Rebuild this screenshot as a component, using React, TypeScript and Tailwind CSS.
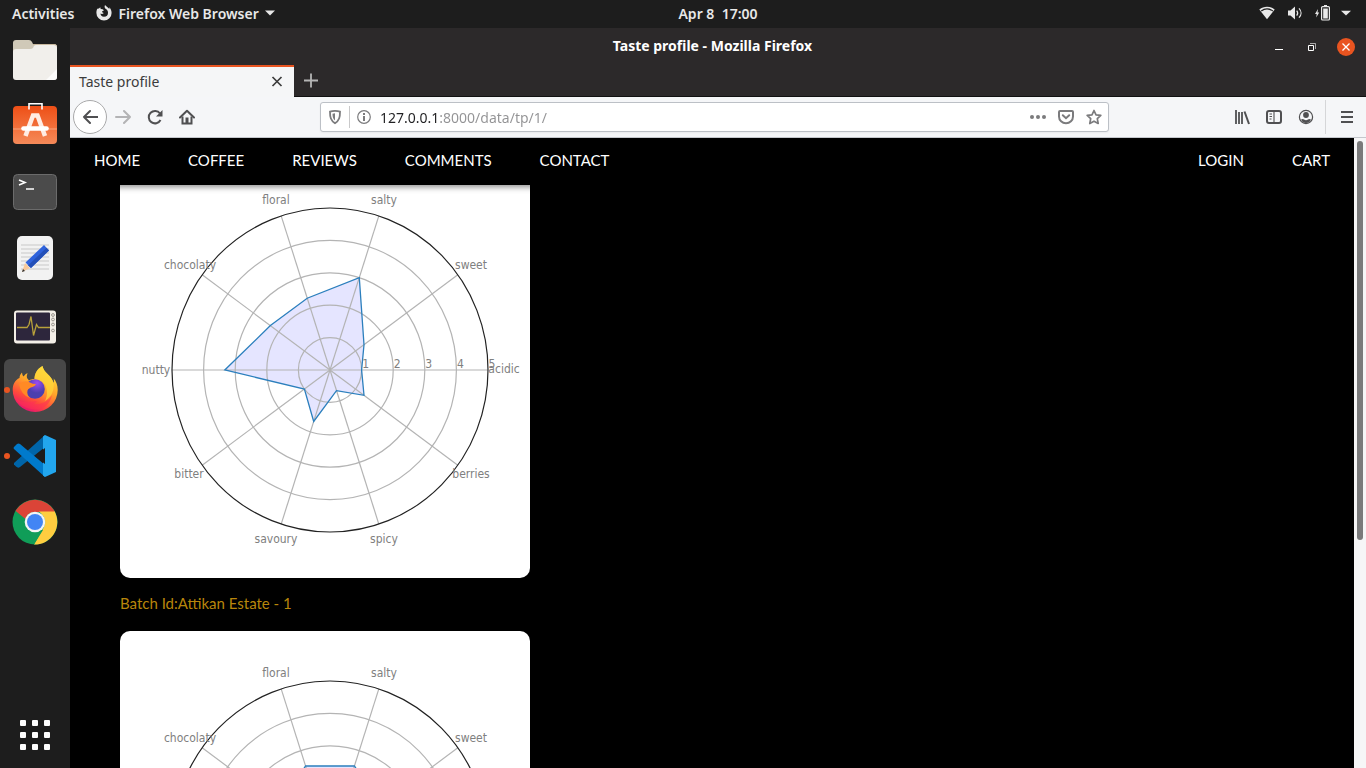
import type { ReactNode } from "react";

type Profile = { id: string; caption: string; values: number[] };

const PROFILES: Profile[] = [
  {
    id: "batch-1",
    caption: "Batch Id:Attikan Estate - 1",
    values: [1, 1.33, 3, 2.33, 2.33, 3.33, 1, 1.67, 0.67, 1.33],
  },
  {
    id: "batch-2",
    caption: "Batch Id:Attikan Estate - 2",
    values: [2, 2, 2.5, 2.5, 2, 2, 1.5, 1, 1, 1.5],
  },
];

const LABELS = [
  { text: "acidic", x: 384, y: 215 },
  { text: "sweet", x: 351, y: 111 },
  { text: "salty", x: 264, y: 46 },
  { text: "floral", x: 156, y: 46 },
  { text: "chocolaty", x: 70, y: 111 },
  { text: "nutty", x: 36, y: 216 },
  { text: "bitter", x: 69, y: 320 },
  { text: "savoury", x: 156, y: 385 },
  { text: "spicy", x: 264, y: 385 },
  { text: "berries", x: 351, y: 320 },
];

const CX = 210;
const CY = 212;
const RX = 31.6;
const RY = 32.4;

function polar(index: number, radius: number) {
  const a = (index * Math.PI) / 5;
  return { x: CX + Math.cos(a) * radius * RX, y: CY - Math.sin(a) * radius * RY };
}

function RadarChart({ values }: { values: number[] }) {
  const points = values
    .map((v, i) => {
      const p = polar(i, v);
      return `${p.x.toFixed(1)},${p.y.toFixed(1)}`;
    })
    .join(" ");
  return (
    <svg viewBox="0 0 410 420" className="block w-full" role="img" aria-label="Taste profile chart">
      <polygon points={points} fill="#0000ff" fillOpacity="0.1" />
      <g fill="none" stroke="#b4b4b4" strokeWidth="1.2">
        {[1, 2, 3, 4].map((r) => (
          <ellipse key={r} cx={CX} cy={CY} rx={r * RX} ry={r * RY} />
        ))}
        {LABELS.map((l, i) => {
          const p = polar(i, 5);
          return <line key={l.text} x1={CX} y1={CY} x2={p.x} y2={p.y} />;
        })}
      </g>
      <polygon points={points} fill="none" stroke="#2b7fbd" strokeWidth="1.3" />
      <ellipse cx={CX} cy={CY} rx={5 * RX} ry={5 * RY} fill="none" stroke="#222" strokeWidth="1.2" />
      <g fill="#808080" textAnchor="middle" className="font-['DejaVu_Sans_Condensed','DejaVu_Sans',sans-serif] text-[12px]">
        {LABELS.map((l) => (
          <text key={l.text} x={l.x} y={l.y}>
            {l.text}
          </text>
        ))}
        {[1, 2, 3, 4, 5].map((n) => (
          <text key={n} x={214 + n * RX} y={210}>
            {n}
          </text>
        ))}
      </g>
    </svg>
  );
}

function Icon({ children, className = "size-4" }: { children: ReactNode; className?: string }) {
  return (
    <svg viewBox="0 0 16 16" className={`block shrink-0 ${className}`} fill="none" stroke="currentColor" strokeWidth="2" aria-hidden="true">
      {children}
    </svg>
  );
}

function TopBar() {
  return (
    <header className="grid h-7 shrink-0 grid-cols-[70px_1fr_auto_1fr] items-center bg-[#1d1d1d] pb-0.5 text-[14px] font-semibold text-[#e8e8e8]">
      <div className="col-span-2 flex items-center pl-3">
        <button type="button">Activities</button>
        <button type="button" className="ml-[22px] flex items-center gap-1.5">
          <Icon>
            <path
              d="M1.300 3.800C.6 5 .4 6.500.4 8a7.600 7.600 0 0 0 15.200 0c0-2.500-.9-4.500-2.500-5.800.3.700.4 1.300.3 1.900C12.600 2.700 10.700 2.200 9 0c-.7 1.600-.4 2.800.5 3.700C11.300 4.700 12 6 12 7.700a4 4 0 0 1-4 4c-2.200 0-3.500-1.600-3.500-3.200 1.200.7 2.600.4 3.200-.5-.9 0-1.600-.6-1.700-1.400L8 5.300C7 4.500 6 4 4.700 4.100L4.300 2.300 2.900 3.600z"
              fill="currentColor"
              stroke="none"
            />
          </Icon>
          <span>Firefox Web Browser</span>
          <Icon className="h-4 w-2.5">
            <path d="M0 4h16L8 12z" fill="currentColor" stroke="none" />
          </Icon>
        </button>
      </div>
      <time className="whitespace-pre">Apr 8  17:00</time>
      <button type="button" aria-label="System menu" className="flex items-center justify-end gap-3 pr-[15px]">
        <Icon>
          <path d="M.3 4.500C4.800.8 11.200.8 15.700 4.500L8 14.200z" fill="currentColor" stroke="none" />
          <path d="M2.200 5.900C5.700 3.500 10.300 3.500 13.800 5.900" stroke="#1d1d1d" strokeWidth="1.200" />
        </Icon>
        <Icon>
          <path d="M1 5.500h2.500L8 1.500v13l-4.500-4H1z" fill="currentColor" stroke="none" />
          <path d="M9.700 5.500a4 4 0 0 1 0 5M12 3.300c2.700 2.800 2.700 6.600 0 9.400" strokeWidth="1.200" />
        </Icon>
        <Icon>
          <path d="M3 4 0 9h1.700L1.200 12.500 4.200 7.500H2.500z" fill="currentColor" stroke="none" />
          <path d="M9 .5h3" strokeWidth="1" />
          <rect x="6.600" y="1.600" width="7.800" height="13.400" rx="1" strokeWidth="1.200" />
          <rect x="8.200" y="3.500" width="4.600" height="10" fill="currentColor" stroke="none" />
        </Icon>
        <Icon className="-ml-0.5 h-4 w-2.5">
          <path d="M0 4.500h16L8 12z" fill="currentColor" stroke="none" />
        </Icon>
      </button>
    </header>
  );
}

function DockItem({ label, active = false, running = false, children }: { label: string; active?: boolean; running?: boolean; children: ReactNode }) {
  return (
    <li>
      <button
        type="button"
        aria-label={label}
        className={`relative flex size-[62px] items-center justify-center rounded-md ${active ? "bg-[#484848]" : ""}`}
      >
        {running && <span className="absolute left-0 size-1.5 rounded-full bg-[#e95420]" />}
        <svg viewBox="0 0 48 48" className="size-12" aria-hidden="true">
          {children}
        </svg>
      </button>
    </li>
  );
}

function Dock() {
  return (
    <nav aria-label="Applications" className="flex w-[70px] shrink-0 flex-col items-center justify-between bg-[#1d1d1d] pt-px pb-0.5">
      <ul className="flex flex-col gap-1">
        <DockItem label="Files">
          <path d="M2 7q0-3 3-3h13q2 0 3 2l1 2h21q3 0 3 3v10H2z" fill="#d0c9b8" />
          <path d="M2 16q0-3 3-3h14q2 0 3-1l1-2q1-1 2-1h18q3 0 3 3v29q0 3-3 3H5q-3 0-3-3z" fill="#f1efeb" />
          <path d="M46 33v8q0 3-3 3h-8z" fill="#fff" opacity=".8" />
          <path d="M22 8.500h21q2 0 3 1.500" stroke="#c9b99f" fill="none" />
        </DockItem>
        <DockItem label="Ubuntu Software">
          <defs>
            <linearGradient id="soft" x2="0" y2="1">
              <stop stopColor="#ee4f16" />
              <stop offset="1" stopColor="#f58a59" />
            </linearGradient>
          </defs>
          <g transform="translate(0 -2)">
            <rect x="2" y="6" width="44" height="38" rx="4" fill="url(#soft)" />
            <path d="M2 29h44" stroke="#f8a47e" strokeWidth="1" />
            <path d="M18 9.500V3.800h13v5.700" fill="none" stroke="#fff" strokeWidth="1.600" />
            <path d="m14.500 36 7.500-20.500h4.500L34 36" fill="none" stroke="#ffece4" strokeWidth="4.500" />
            <path d="M12.500 28.500h23" stroke="#fff" strokeWidth="4.600" strokeLinecap="round" />
          </g>
        </DockItem>
        <DockItem label="Terminal">
          <rect x="2.500" y="6.500" width="43" height="35" rx="4" fill="#4b4b4b" stroke="#6b6b6b" />
          <path d="m8 12 6 2.500L8 17M15 21h8" stroke="#fff" strokeWidth="1.600" fill="none" />
        </DockItem>
        <DockItem label="Text Editor">
          <rect x="6" y="2" width="36" height="44" rx="5" fill="#f2f2f2" />
          <path d="M10 11h28M10 15h28M10 19h28M10 23h28M10 27h28M10 31h28M10 35h28" stroke="#c8c8c8" />
          <path d="m11 38 3-9 5 5z" fill="#f8c99b" />
          <path d="m11 38 1-3 2 2z" fill="#333" />
          <path d="M14.500 28.500 33 11l5 5.500L20 34z" fill="#2f63dc" />
          <path d="M17 31.500 35.500 13.800l2.500 2.700L20 34z" fill="#2450b8" />
        </DockItem>
        <DockItem label="System Monitor">
          <g transform="translate(0 3.500)">
            <rect x="3" y="7" width="42" height="33" rx="3" fill="#f3efe7" />
            <rect x="5" y="9" width="34" height="28" rx="1" fill="#2d263c" />
            <path d="M6 24h10l2-3 2-8 2.500 19 3-11 2 3H39" fill="none" stroke="#b8a13b" strokeWidth="1.300" />
            <g fill="none" stroke="#99958e">
              <circle cx="42" cy="11.500" r="1.400" />
              <circle cx="42" cy="16" r="1.400" />
              <circle cx="42" cy="21" r="1.400" />
              <circle cx="42" cy="27" r="1.400" />
            </g>
          </g>
        </DockItem>
        <DockItem label="Firefox" active running>
          <defs>
            <linearGradient id="fx" x1=".8" y1=".1" x2=".35" y2="1">
              <stop stopColor="#ffe03c" />
              <stop offset=".4" stopColor="#ffa52a" />
              <stop offset=".72" stopColor="#ff4d3a" />
              <stop offset="1" stopColor="#e7136f" />
            </linearGradient>
            <radialGradient id="fxg" cx=".6" cy=".2">
              <stop stopColor="#9c4cf0" />
              <stop offset="1" stopColor="#4b3fae" />
            </radialGradient>
          </defs>
          <g transform="translate(0 -1.500)">
            <path
              d="M11 8c-1.500 1.500-2.500 3.500-2.500 5.500C4 15.500 1.700 20 1.700 25.500a22.500 22 0 0 0 45 0c0-5-1.500-8.500-4-11.500 .3 2 .2 3-.1 4.500C40.500 10.500 33 9 31.500 1.500 26 4.500 23.500 9.500 23.500 14.500c-2.500 0-4 .5-5.500 1.500L16 13.500q-.5-2.500.5-5-2 .8-4 3.500Q11 10 11 8z"
              fill="url(#fx)"
            />
            <path d="M31.500 1.500c1.500 7.500 9 9 11.100 17 1 10-4 15-8.600 18 3-5 3-15-2.500-19-3-2-5.500-3-8-3 0-5 2.500-10 8-13z" fill="#ffd93a" opacity=".7" />
            <circle cx="24" cy="24.500" r="9.800" fill="url(#fxg)" />
            <path d="M8 19.500q6-4.500 11-1.500 2.500 1.500 6 1.500-.5 2-3.500 3-4 1-5 3.500-1 4 2.500 7.500-9-3-11-14z" fill="#ff8a25" />
            <path d="M3 31q6 8 15 6.500 5-.5 8-1-3 2.500-3 3.500 12 0 18-9-4 14-17 14Q8 44 3 31z" fill="#ff3056" opacity=".55" />
          </g>
        </DockItem>
        <DockItem label="Visual Studio Code" running>
          <path d="M3 31 34 3v12L9 35q-2 1.500-4-.5l-2-2z" fill="#0065a9" />
          <path d="M3 17q-1-1 0-2l3-3q1.500-1 3 0L34 33v12z" fill="#007acc" />
          <path d="M34 3 45 8v32l-11 5-2-1.500V4.500z" fill="#22a6ee" />
          <path d="M24 24 34 16v16z" fill="#1d1d1d" />
        </DockItem>
        <DockItem label="Google Chrome">
          <circle cx="24" cy="24" r="22.500" fill="#109d58" />
          <path d="M4.500 13A22.500 22.500 0 0 1 44 14H24a10 10 0 0 0-9.500 7z" fill="#db4437" />
          <path d="M43.700 13.500A22.500 22.500 0 0 1 23 46.500L33 29q4-8-5-15.500z" fill="#ffcd40" />
          <path d="M4.500 13 15.500 29 23 46.500l9-14.500H24z" fill="#109d58" />
          <circle cx="24" cy="24" r="10.300" fill="#f4f4f4" />
          <circle cx="24" cy="24" r="8" fill="#4285f4" />
        </DockItem>
      </ul>
      <button type="button" aria-label="Show Applications" className="grid size-[62px] grid-cols-[6px_6px_6px] place-content-center gap-1.5">
        {Array.from({ length: 9 }, (_, i) => (
          <span key={i} className="size-1.5 rounded-[1px] bg-white" />
        ))}
      </button>
    </nav>
  );
}

function TitleAndTabs() {
  return (
    <div className="shrink-0 bg-[#2c292a]">
      <div className="grid h-[37px] grid-cols-[1fr_auto_1fr] items-center pr-[11px]">
        <h1 className="col-start-2 pb-0.5 text-[14px] font-bold text-white">Taste profile - Mozilla Firefox</h1>
        <div className="flex items-center justify-end gap-[17px] text-white">
          <button type="button" aria-label="Minimize">
            <Icon>
              <path d="M4 10.500h8" strokeWidth="1" />
            </Icon>
          </button>
          <button type="button" aria-label="Restore">
            <Icon>
              <path d="M4.500 6.500h5v5h-5z" strokeWidth="1" />
              <path d="M6 4.500h5.500V10" strokeWidth="1" opacity=".6" />
            </Icon>
          </button>
          <button type="button" aria-label="Close window" className="flex size-[18px] items-center justify-center rounded-full bg-[#e95420]">
            <Icon>
              <path d="m4.500 4.500 7 7m0-7-7 7" strokeWidth="1.300" />
            </Icon>
          </button>
        </div>
      </div>
      <div className="flex h-8 items-stretch border-b border-[#111]">
        <div className="-mb-px flex w-56 items-center justify-between border-t-2 border-[#e95420] bg-[#f5f6f7] pr-[9px] pb-0.5 pl-[9px] text-[#3c3c3c]">
          <span className="text-[14px]">Taste profile</span>
          <button type="button" aria-label="Close tab">
            <Icon>
              <path d="m3.500 4 9 9m0-9-9 9" strokeWidth="1.700" />
            </Icon>
          </button>
        </div>
        <button type="button" aria-label="New tab" className="px-2.5 pb-0.5 text-[#b5b5b5]">
          <Icon>
            <path d="M7 1.500v14M0 8.500h14" strokeWidth="1.800" />
          </Icon>
        </button>
      </div>
    </div>
  );
}

function Toolbar() {
  return (
    <div className="flex h-[41px] shrink-0 items-center border-b border-[#c4c7cc] bg-[#f5f6f8] pl-[3px] text-[#505052]">
      <button type="button" aria-label="Back" className="flex size-[34px] items-center justify-center rounded-full border border-[#a9a9aa] bg-white">
        <Icon>
          <path d="M15.500 8H2M8 2 2 8l6 6" strokeLinecap="round" strokeLinejoin="round" />
        </Icon>
      </button>
      <div className="ml-2 flex gap-4">
        <button type="button" aria-label="Forward" className="text-[#b3b3b5]">
          <Icon>
            <path d="M1 8h14M9 2l6 6-6 6" strokeLinecap="round" strokeLinejoin="round" />
          </Icon>
        </button>
        <button type="button" aria-label="Reload">
          <Icon>
            <path d="M13.500 11A6.200 6.200 0 1 1 13 4.500" />
            <path d="M15.500 1v6.500H9z" fill="currentColor" stroke="none" />
          </Icon>
        </button>
        <button type="button" aria-label="Home">
          <Icon>
            <path d="M1 8.500 8 1.800l7 6.700" strokeLinecap="round" strokeLinejoin="round" />
            <path d="M3.500 7.500V14.500h9V7.500" />
            <path d="M6.500 8.500h3v6h-3z" fill="currentColor" stroke="none" />
          </Icon>
        </button>
      </div>
      <div className="mx-[125px] flex h-[30px] min-w-0 flex-1 items-center rounded-[3px] border border-[#bcc0c6] bg-white px-1.5 text-[#7b7b7d] shadow-xs">
        <Icon>
          <path d="M8 1.800c1.800 0 3.500.3 5 .9 0 5.500-.7 8.800-5 11.500C3.700 11.500 3 8.200 3 2.700c1.500-.6 3.200-.9 5-.9z" strokeWidth="1.800" />
          <path d="M8 4.300v7.200C6 10 5.500 8 5.500 4.700q1-.4 2.500-.4z" fill="currentColor" stroke="none" />
        </Icon>
        <span className="mx-1.5 h-[22px] w-px bg-[#c9c9ca]" />
        <Icon>
          <circle cx="8" cy="8" r="6.300" strokeWidth="1.200" />
          <path d="M8 7v5" />
          <path d="M8 4v2" />
        </Icon>
        <input
          aria-label="Address"
          type="text"
          defaultValue="127.0.0.1:8000/data/tp/1/"
          className="ml-2 min-w-0 flex-1 bg-[linear-gradient(to_right,#202022_58px,#929294_58px)] bg-clip-text text-[14px] text-transparent outline-none"
        />
        <div className="flex gap-3">
          <button type="button" aria-label="Page actions">
            <Icon>
              <g fill="currentColor" stroke="none">
                <circle cx="2" cy="8" r="2" />
                <circle cx="8" cy="8" r="2" />
                <circle cx="14" cy="8" r="2" />
              </g>
            </Icon>
          </button>
          <button type="button" aria-label="Save to Pocket">
            <Icon>
              <path d="M1 3q0-1 1-1h12q1 0 1 1v4.500a7 6.800 0 0 1-14 0z" />
              <path d="m4.800 6.200 3.200 3 3.200-3" strokeLinecap="round" />
            </Icon>
          </button>
          <button type="button" aria-label="Bookmark this page">
            <Icon>
              <path d="m8 1.500 2 4.300 4.800.6-3.500 3.300.9 4.800L8 12.200l-4.200 2.300.9-4.800L1.200 6.400 6 5.800z" strokeWidth="1.700" strokeLinejoin="round" />
            </Icon>
          </button>
        </div>
      </div>
      <div className="flex gap-4">
        <button type="button" aria-label="Library">
          <Icon>
            <path d="M2 1v14M5 3v12M8 3v12" strokeWidth="1.800" />
            <path d="m10.500 2.500 4.500 12.500" />
          </Icon>
        </button>
        <button type="button" aria-label="Sidebars">
          <Icon>
            <rect x="1" y="2" width="14" height="12" rx="2" />
            <path d="M8 2v12M3.500 5h2.500M3.500 7.500h2.500M3.500 10h2" strokeWidth="1.100" />
          </Icon>
        </button>
        <button type="button" aria-label="Account">
          <Icon>
            <circle cx="8" cy="8" r="6.600" strokeWidth="1.200" />
            <circle cx="8" cy="6" r="2.900" fill="currentColor" stroke="none" />
            <path d="M3 10.500q2-1 3 0 2 1.500 4 0 1-1 3 0-1.500 3.500-5 3.500t-5-3.500z" fill="currentColor" stroke="none" />
          </Icon>
        </button>
      </div>
      <div className="ml-[11px] flex h-[34px] items-center border-l border-[#d5d6d8] pr-[11px] pl-[13px]">
        <button type="button" aria-label="Open menu">
          <Icon>
            <path d="M2 3h12M2 8h12M2 13h12" />
          </Icon>
        </button>
      </div>
    </div>
  );
}

function NavLinks({ items }: { items: string[] }) {
  return (
    <ul className="flex gap-12">
      {items.map((item) => (
        <li key={item}>
          <a href={`#${item.toLowerCase()}`}>{item}</a>
        </li>
      ))}
    </ul>
  );
}

function Page() {
  return (
    <div className="flex min-h-0 flex-1">
      <div className="min-w-0 flex-1 overflow-hidden bg-black font-['Lato',sans-serif] text-[15px]">
        <nav aria-label="Main" className="relative z-10 flex h-[47px] items-center justify-between bg-black px-6 pb-0.5 text-white shadow-[0_2px_6px_rgba(0,0,0,0.45)]">
          <NavLinks items={["HOME", "COFFEE", "REVIEWS", "COMMENTS", "CONTACT"]} />
          <NavLinks items={["LOGIN", "CART"]} />
        </nav>
        <main className="-mt-[27px] pl-[50px]">
          {PROFILES.map((p) => (
            <figure key={p.id} className="w-full max-w-[410px]">
              <div className="overflow-hidden rounded-[10px] bg-white">
                <RadarChart values={p.values} />
              </div>
              <figcaption className="flex h-[53px] items-center pb-0.5 text-[#b8860b]">{p.caption}</figcaption>
            </figure>
          ))}
        </main>
      </div>
      <div className="w-3 shrink-0 bg-[#f6f6f7] px-[3px] pt-[3px]">
        <div className="h-[399px] max-h-full rounded-full bg-[#7a7a7b]" />
      </div>
    </div>
  );
}

export default function App() {
  return (
    <div className="flex h-screen flex-col overflow-hidden bg-black font-['Noto_Sans',sans-serif]">
      <TopBar />
      <div className="flex min-h-0 flex-1">
        <Dock />
        <div className="flex min-w-0 flex-1 flex-col">
          <TitleAndTabs />
          <Toolbar />
          <Page />
        </div>
      </div>
    </div>
  );
}
